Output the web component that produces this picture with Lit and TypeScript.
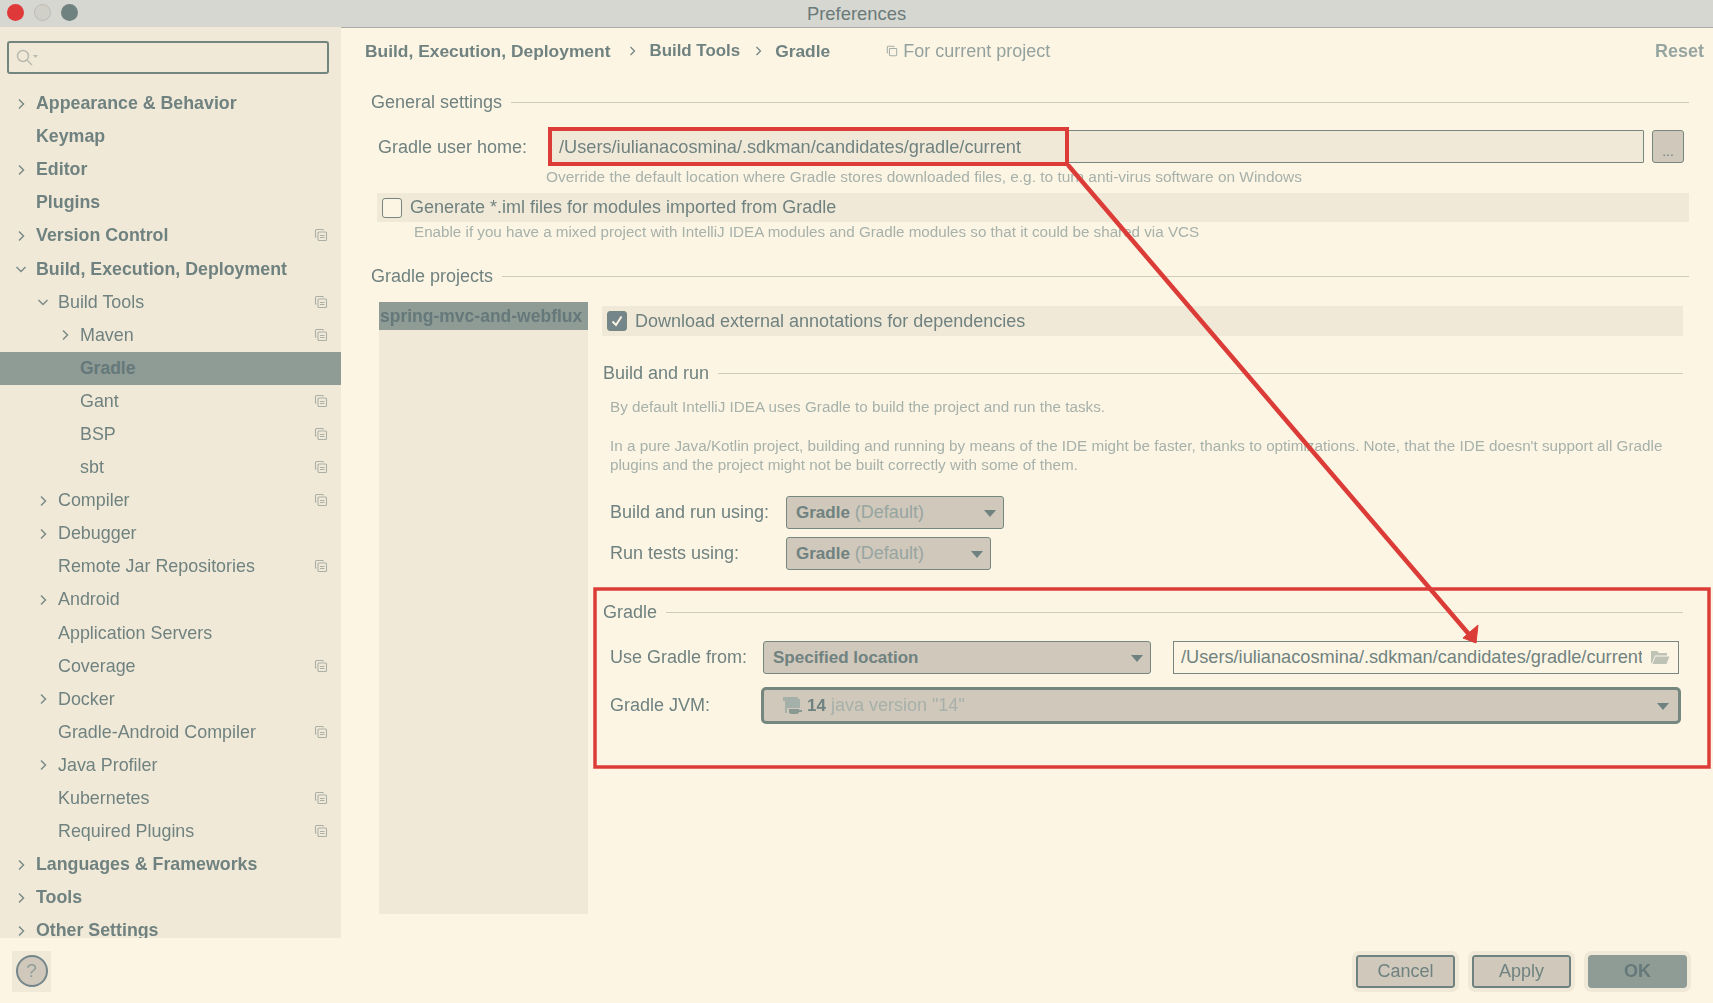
import { LitElement, html, css, svg } from 'lit';
import { customElement } from 'lit/decorators.js';

type NavItem = {
  label: string;
  depth: number;
  bold?: boolean;
  arrow?: 'right' | 'down';
  copy?: boolean;
  selected?: boolean;
};

const NAV: NavItem[] = [
  { label: 'Appearance & Behavior', depth: 0, bold: true, arrow: 'right' },
  { label: 'Keymap', depth: 0, bold: true },
  { label: 'Editor', depth: 0, bold: true, arrow: 'right' },
  { label: 'Plugins', depth: 0, bold: true },
  { label: 'Version Control', depth: 0, bold: true, arrow: 'right', copy: true },
  { label: 'Build, Execution, Deployment', depth: 0, bold: true, arrow: 'down' },
  { label: 'Build Tools', depth: 1, arrow: 'down', copy: true },
  { label: 'Maven', depth: 2, arrow: 'right', copy: true },
  { label: 'Gradle', depth: 2, selected: true },
  { label: 'Gant', depth: 2, copy: true },
  { label: 'BSP', depth: 2, copy: true },
  { label: 'sbt', depth: 2, copy: true },
  { label: 'Compiler', depth: 1, arrow: 'right', copy: true },
  { label: 'Debugger', depth: 1, arrow: 'right' },
  { label: 'Remote Jar Repositories', depth: 1, copy: true },
  { label: 'Android', depth: 1, arrow: 'right' },
  { label: 'Application Servers', depth: 1 },
  { label: 'Coverage', depth: 1, copy: true },
  { label: 'Docker', depth: 1, arrow: 'right' },
  { label: 'Gradle-Android Compiler', depth: 1, copy: true },
  { label: 'Java Profiler', depth: 1, arrow: 'right' },
  { label: 'Kubernetes', depth: 1, copy: true },
  { label: 'Required Plugins', depth: 1, copy: true },
  { label: 'Languages & Frameworks', depth: 0, bold: true, arrow: 'right' },
  { label: 'Tools', depth: 0, bold: true, arrow: 'right' },
  { label: 'Other Settings', depth: 0, bold: true, arrow: 'right' },
];

const copyIcon = html`<svg class="copy" viewBox="0 0 14 14" fill="none" stroke="currentColor" stroke-width="1.1">
  <path d="M9 2.500V1.500H2.500a1 1 0 0 0-1 1V9h1" />
  <rect x="4" y="4" width="8.500" height="8.500" rx="1" />
  <path d="M6 7.500h4.500M6 9.500h4.500" />
</svg>`;

const chevron = (dir: 'right' | 'down') =>
  svg`<svg class="chev" viewBox="0 0 12 12" fill="none" stroke="currentColor" stroke-width="1.5">
    <path d=${dir === 'right' ? 'M4 1.500 8.500 6 4 10.500' : 'M1.500 4 6 8.500 10.500 4'} />
  </svg>`;

const crumbSep = (extra = '') => html`<svg class="crumb-sep ${extra}" viewBox="0 0 7 10" fill="none" stroke="currentColor" stroke-width="1.2">
  <path d="M1.500 1 5.500 5 1.500 9" />
</svg>`;

const caret = html`<span class="caret"></span>`;

@customElement('app-root')
export class AppRoot extends LitElement {
  static override styles = css`
    :host {
      display: block;
      width: 1713px;
      height: 1003px;
      position: relative;
      overflow: hidden;
      background: #fdf5e4;
      color: #6f8280;
      font-family: 'Liberation Sans', Arial, sans-serif;
      font-size: 18px;
    }
    .titlebar {
      height: 26px;
      background: #d6d7d1;
      border-bottom: 1px solid #a9aea8;
      display: flex;
      align-items: center;
      justify-content: center;
      position: relative;
      font-size: 18.4px;
      color: #6a7a78;
      padding-top: 1px;
      box-sizing: content-box;
      margin-bottom: -1px;
    }
    .lights {
      position: absolute;
      left: 7px;
      top: 4px;
      display: flex;
      gap: 10px;
    }
    .light {
      width: 17px;
      height: 17px;
      border-radius: 50%;
    }
    .light.red { background: #e0393a; }
    .light.off { background: #d0cfc8; border: 1px solid #bdbcb4; box-sizing: border-box; }
    .light.on { background: #6f8280; }

    .main {
      display: flex;
      height: 976px;
      filter: blur(0.35px);
    }
    .side {
      width: 341px;
      flex: none;
      display: flex;
      flex-direction: column;
    }
    .side-top {
      height: 911px;
      background: #f1e9d8;
      overflow: hidden;
      padding: 14px 0 0;
      box-sizing: border-box;
    }
    .search {
      margin: 0 12px 0 7px;
      height: 33px;
      box-sizing: border-box;
      border: 2px solid #73857f;
      border-radius: 3px;
      display: flex;
      align-items: center;
      padding-left: 7px;
      color: #b9bbb0;
    }
    .search svg { width: 22px; height: 18px; }
    .tree { margin-top: 13px; }
    .row {
      height: 33.1px;
      display: flex;
      align-items: center;
      position: relative;
      box-sizing: border-box;
      font-size: 17.9px;
      white-space: nowrap;
    }
    .row.bold { font-weight: 700; font-size: 17.8px; }
    .row.sel { background: #8f9b95; color: #65787a; font-weight: 700; font-size: 17.5px; }
    .chev {
      width: 12px;
      height: 12px;
      flex: none;
      margin-right: 9px;
      margin-left: -21px;
      color: #7b8b88;
    }
    .copy {
      width: 14px;
      height: 14px;
      color: #aab0a5;
      position: absolute;
      right: 13px;
      top: 9px;
    }
    .help-bar {
      flex: 1;
      display: flex;
      align-items: center;
      padding: 1px 0 0 12px;
    }
    .help-back {
      width: 39px;
      height: 41px;
      background: #f1e9d8;
      display: flex;
      align-items: center;
      justify-content: center;
    }
    .help {
      width: 32px;
      height: 32px;
      box-sizing: border-box;
      border-radius: 50%;
      background: #cfc8bb;
      border: 2px solid #74868a;
      display: flex;
      align-items: center;
      justify-content: center;
      color: #8f9d9b;
      font-size: 19px;
    }

    .content {
      flex: 1;
      min-width: 0;
      display: flex;
      flex-direction: column;
    }
    .crumbs {
      height: 48px;
      display: flex;
      align-items: center;
      padding: 0 9px 0 24px;
      font-weight: 700;
      font-size: 17.4px;
    }
    .crumb-mid { font-size: 16.9px; }
    .crumb-sep {
      margin: 0 13px 0 19px;
      width: 7px;
      height: 10px;
      color: #6f8280;
      flex: none;
    }
    .crumb-sep.second { margin-left: 15px; }
    .scope {
      margin-left: 56px;
      font-weight: 400;
      font-size: 18px;
      color: #94a29f;
      display: flex;
      align-items: center;
      gap: 5px;
    }
    .scope svg { width: 12px; height: 12px; color: #a3aea8; }
    .reset { margin-left: auto; color: #97a5a1; font-size: 18px; }

    .body { padding: 16px 24px 0 30px; }
    .sect {
      display: flex;
      align-items: center;
      gap: 9px;
      height: 22px;
    }
    .sect::after {
      content: '';
      flex: 1;
      height: 1px;
      background: #d0ccbb;
    }
    .sect.projects-head { margin-top: 25px; }
    .home {
      display: flex;
      align-items: center;
      margin: 17px 0 0 7px;
      height: 33px;
    }
    .home label { width: 170px; flex: none; padding-top: 1px; }
    .field {
      flex: 1;
      height: 33px;
      box-sizing: border-box;
      background: #f1e9d8;
      border: 1px solid #75877f;
      border-radius: 1px;
      padding: 1px 0 0 10px;
      display: flex;
      align-items: center;
      min-width: 0;
      font-size: 18.2px;
    }
    .dots {
      width: 32px;
      height: 33px;
      margin: 0 5px 0 8px;
      box-sizing: border-box;
      background: #cfc8bb;
      border: 1px solid #75877f;
      border-radius: 3px;
      display: flex;
      align-items: flex-end;
      justify-content: center;
      line-height: 22px;
      font-size: 14px;
      flex: none;
    }
    .hint { font-size: 15.35px; line-height: 17px; color: #a6b1aa; white-space: nowrap; }
    .hint.home-hint { margin: 5px 0 0 175px; font-size: 15.45px; }
    .hint.iml-hint { margin: 1px 0 0 43px; font-size: 15.2px; }
    .check-row {
      background: #f1e9d8;
      height: 29px;
      display: flex;
      align-items: center;
      padding-left: 5px;
      gap: 8px;
    }
    .iml { margin: 8px 0 0 6px; }
    .check {
      width: 20px;
      height: 20px;
      box-sizing: border-box;
      border: 1px solid #75877f;
      border-radius: 3px;
      background: #fdf5e4;
      flex: none;
    }
    .check.on {
      background: #74868a;
      display: flex;
      align-items: center;
      justify-content: center;
    }
    .projects {
      display: flex;
      margin: 15px 0 0 8px;
      gap: 9px;
    }
    .plist {
      width: 209px;
      height: 612px;
      flex: none;
      background: #f1e9d8;
    }
    .plist-sel {
      height: 28px;
      background: #8f9b95;
      color: #65787a;
      font-weight: 700;
      font-size: 17.5px;
      line-height: 28px;
      padding-left: 1px;
      white-space: nowrap;
      overflow: hidden;
    }
    .pdetail {
      flex: 1;
      min-width: 0;
      padding-top: 4px;
    }
    .pdetail .check-row { margin: 0 6px 0 5px; height: 30px; }
    .sub { margin: 26px 6px 0 6px; }
    .bhint { margin: 14px 0 0 13px; }
    .bhint + .bhint { margin-top: 21px; }
    .bhint p { margin: 0; line-height: 19px; }
    .bhint.pure { font-size: 15.25px; }
    .grid {
      display: grid;
      grid-template-columns: 176px auto 1fr;
      align-items: center;
      margin: 22px 0 0 13px;
      row-gap: 8px;
    }
    .combo {
      height: 33px;
      box-sizing: border-box;
      background: #cfc8bb;
      border: 1px solid #75877f;
      border-radius: 3px;
      display: flex;
      align-items: center;
      padding: 0 9px;
      position: relative;
      white-space: nowrap;
    }
    .combo b { margin-right: 5px; font-size: 17px; }
    .combo .dim { color: #97a5a1; }
    .caret {
      position: absolute;
      right: 7px;
      top: 50%;
      margin-top: -3px;
      width: 0;
      height: 0;
      border-left: 6px solid transparent;
      border-right: 6px solid transparent;
      border-top: 7px solid #6f8280;
    }
    .w218 { width: 218px; }
    .w205 { width: 205px; }
    .gradle { margin: 31px 6px 0 6px; }
    .from {
      display: flex;
      align-items: center;
      margin: 18px 10px 0 13px;
    }
    .from label { width: 153px; flex: none; }
    .from .combo { width: 388px; flex: none; }
    .path {
      margin-left: 22px;
      flex: 1;
      height: 33px;
      box-sizing: border-box;
      border: 1px solid #75877f;
      background: #fdf5e4;
      padding-left: 7px;
      display: flex;
      align-items: center;
      position: relative;
      overflow: hidden;
      white-space: nowrap;
      font-size: 18.2px;
    }
    .path span { width: 461px; overflow: hidden; display: block; }
    .path svg { position: absolute; right: 8px; top: 7px; width: 20px; height: 17px; }
    .jvm {
      display: flex;
      align-items: center;
      margin: 13px 8px 0 13px;
    }
    .jvm label { width: 151px; flex: none; }
    .jvm .combo {
      flex: 1;
      height: 37px;
      border: 3px solid #75877f;
      border-radius: 5px;
      padding-left: 18px;
    }
    .jvm .caret { right: 9px; }
    .jvm svg { width: 22px; height: 20px; margin-right: 3px; }
    .jvm .dim { color: #a7b0a9; }

    .footer {
      height: 65px;
      margin-top: auto;
      display: flex;
      justify-content: flex-end;
      align-items: center;
      gap: 17px;
      padding: 1px 26px 0 0;
      box-sizing: border-box;
    }
    .btn {
      width: 99px;
      height: 33px;
      box-sizing: border-box;
      background: #cfc8bb;
      border: 2px solid #6f8280;
      border-radius: 3px;
      display: flex;
      align-items: center;
      justify-content: center;
      outline: 4px solid #f1e9d8;
    }
    .btn.ok { background: #8f9b95; border-color: #8f9b95; font-weight: 700; color: #65787a; }

    .marks {
      position: absolute;
      left: 0;
      top: 0;
      width: 1713px;
      height: 1003px;
      pointer-events: none;
    }
  `;

  override render() {
    return html`
      <div class="titlebar">
        <div class="lights">
          <span class="light red"></span><span class="light off"></span><span class="light on"></span>
        </div>
        Preferences
      </div>
      <div class="main">
        <div class="side">
          <div class="side-top">
            <div class="search">
              <svg viewBox="0 0 22 18" fill="none" stroke="currentColor" stroke-width="1.5">
                <circle cx="7" cy="7" r="5.500" />
                <path d="M11 11l5 5" />
                <path d="M17 6h5l-2.500 3z" fill="currentColor" stroke="none" />
              </svg>
            </div>
            <div class="tree">${NAV.map((n) => this._row(n))}</div>
          </div>
          <div class="help-bar"><div class="help-back"><div class="help">?</div></div></div>
        </div>
        <div class="content">
          <div class="crumbs">
            Build, Execution, Deployment
            ${crumbSep()}
            <span class="crumb-mid">Build Tools</span>
            ${crumbSep('second')}
            Gradle
            <span class="scope">
              <svg viewBox="0 0 14 14" fill="none" stroke="currentColor" stroke-width="1.200">
                <path d="M9 2.500V1.500H2.500a1 1 0 0 0-1 1V9h1" />
                <rect x="4" y="4" width="8.500" height="8.500" rx="1" />
              </svg>
              For current project
            </span>
            <span class="reset">Reset</span>
          </div>
          <div class="body">
            <div class="sect">General settings</div>
            <div class="home">
              <label>Gradle user home:</label>
              <div class="field">/Users/iulianacosmina/.sdkman/candidates/gradle/current</div>
              <div class="dots">...</div>
            </div>
            <div class="hint home-hint">Override the default location where Gradle stores downloaded files, e.g. to turn anti-virus software on Windows</div>
            <div class="check-row iml">
              <span class="check"></span>
              Generate *.iml files for modules imported from Gradle
            </div>
            <div class="hint iml-hint">Enable if you have a mixed project with IntelliJ IDEA modules and Gradle modules so that it could be shared via VCS</div>
            <div class="sect projects-head">Gradle projects</div>
            <div class="projects">
              <div class="plist"><div class="plist-sel">spring-mvc-and-webflux</div></div>
              <div class="pdetail">
                <div class="check-row">
                  <span class="check on">
                    <svg width="14" height="14" viewBox="0 0 14 14" fill="none" stroke="#fdf5e4" stroke-width="2"><path d="M2.500 7.500 6 11 11.500 2.500" /></svg>
                  </span>
                  Download external annotations for dependencies
                </div>
                <div class="sect sub">Build and run</div>
                <div class="hint bhint pure">By default IntelliJ IDEA uses Gradle to build the project and run the tasks.</div>
                <div class="hint bhint pure">
                  <p>In a pure Java/Kotlin project, building and running by means of the IDE might be faster, thanks to optimizations. Note, that the IDE doesn't support all Gradle</p>
                  <p>plugins and the project might not be built correctly with some of them.</p>
                </div>
                <div class="grid">
                  <label>Build and run using:</label>
                  <div class="combo w218"><b>Gradle</b> <span class="dim">(Default)</span>${caret}</div>
                  <span></span>
                  <label>Run tests using:</label>
                  <div class="combo w205"><b>Gradle</b> <span class="dim">(Default)</span>${caret}</div>
                  <span></span>
                </div>
                <div class="sect gradle">Gradle</div>
                <div class="from">
                  <label>Use Gradle from:</label>
                  <div class="combo"><b>Specified location</b>${caret}</div>
                  <div class="path">
                    <span>/Users/iulianacosmina/.sdkman/candidates/gradle/current</span>
                    <svg viewBox="0 0 20 17" fill="#bfc3b6">
                      <path d="M1 2h6l2 2h8v2.500H5L2 14H1z" />
                      <path d="M5.500 7.500H19.500l-3 7.500H2.500z" />
                    </svg>
                  </div>
                </div>
                <div class="jvm">
                  <label>Gradle JVM:</label>
                  <div class="combo">
                    <svg viewBox="0 0 22 20" fill="#a6b0aa">
                      <path d="M1 1h15v2h2v9H5v5H3V5H1z" />
                      <path d="M7 13h10v2.500a2.500 2.500 0 0 1-2.500 2.500h-5A2.500 2.500 0 0 1 7 15.500z" fill="#8a9892" />
                      <path d="M17 14h3v2h-3z" fill="#8a9892" />
                    </svg>
                    <b>14</b><span class="dim">java version "14"</span>${caret}
                  </div>
                </div>
              </div>
            </div>
          </div>
          <div class="footer">
            <div class="btn">Cancel</div>
            <div class="btn">Apply</div>
            <div class="btn ok">OK</div>
          </div>
        </div>
      </div>
      <svg class="marks" viewBox="0 0 1713 1003" fill="none" stroke="#dc3c38">
        <rect x="550" y="129" width="517" height="35" stroke-width="4" />
        <rect x="595" y="589" width="1114" height="178" stroke-width="3.500" />
        <path d="M1068 165 1473 639" stroke-width="4.500" />
        <path d="M1463 638 1478 625 1476 643z" fill="#dc3c38" stroke-width="1" />
      </svg>
    `;
  }

  private _row(n: NavItem) {
    const pad = 36 + n.depth * 22;
    return html`<div class="row ${n.bold ? 'bold' : ''} ${n.selected ? 'sel' : ''}" style="padding-left:${pad}px">
      ${n.arrow ? chevron(n.arrow) : ''}${n.label}${n.copy ? copyIcon : ''}
    </div>`;
  }
}
